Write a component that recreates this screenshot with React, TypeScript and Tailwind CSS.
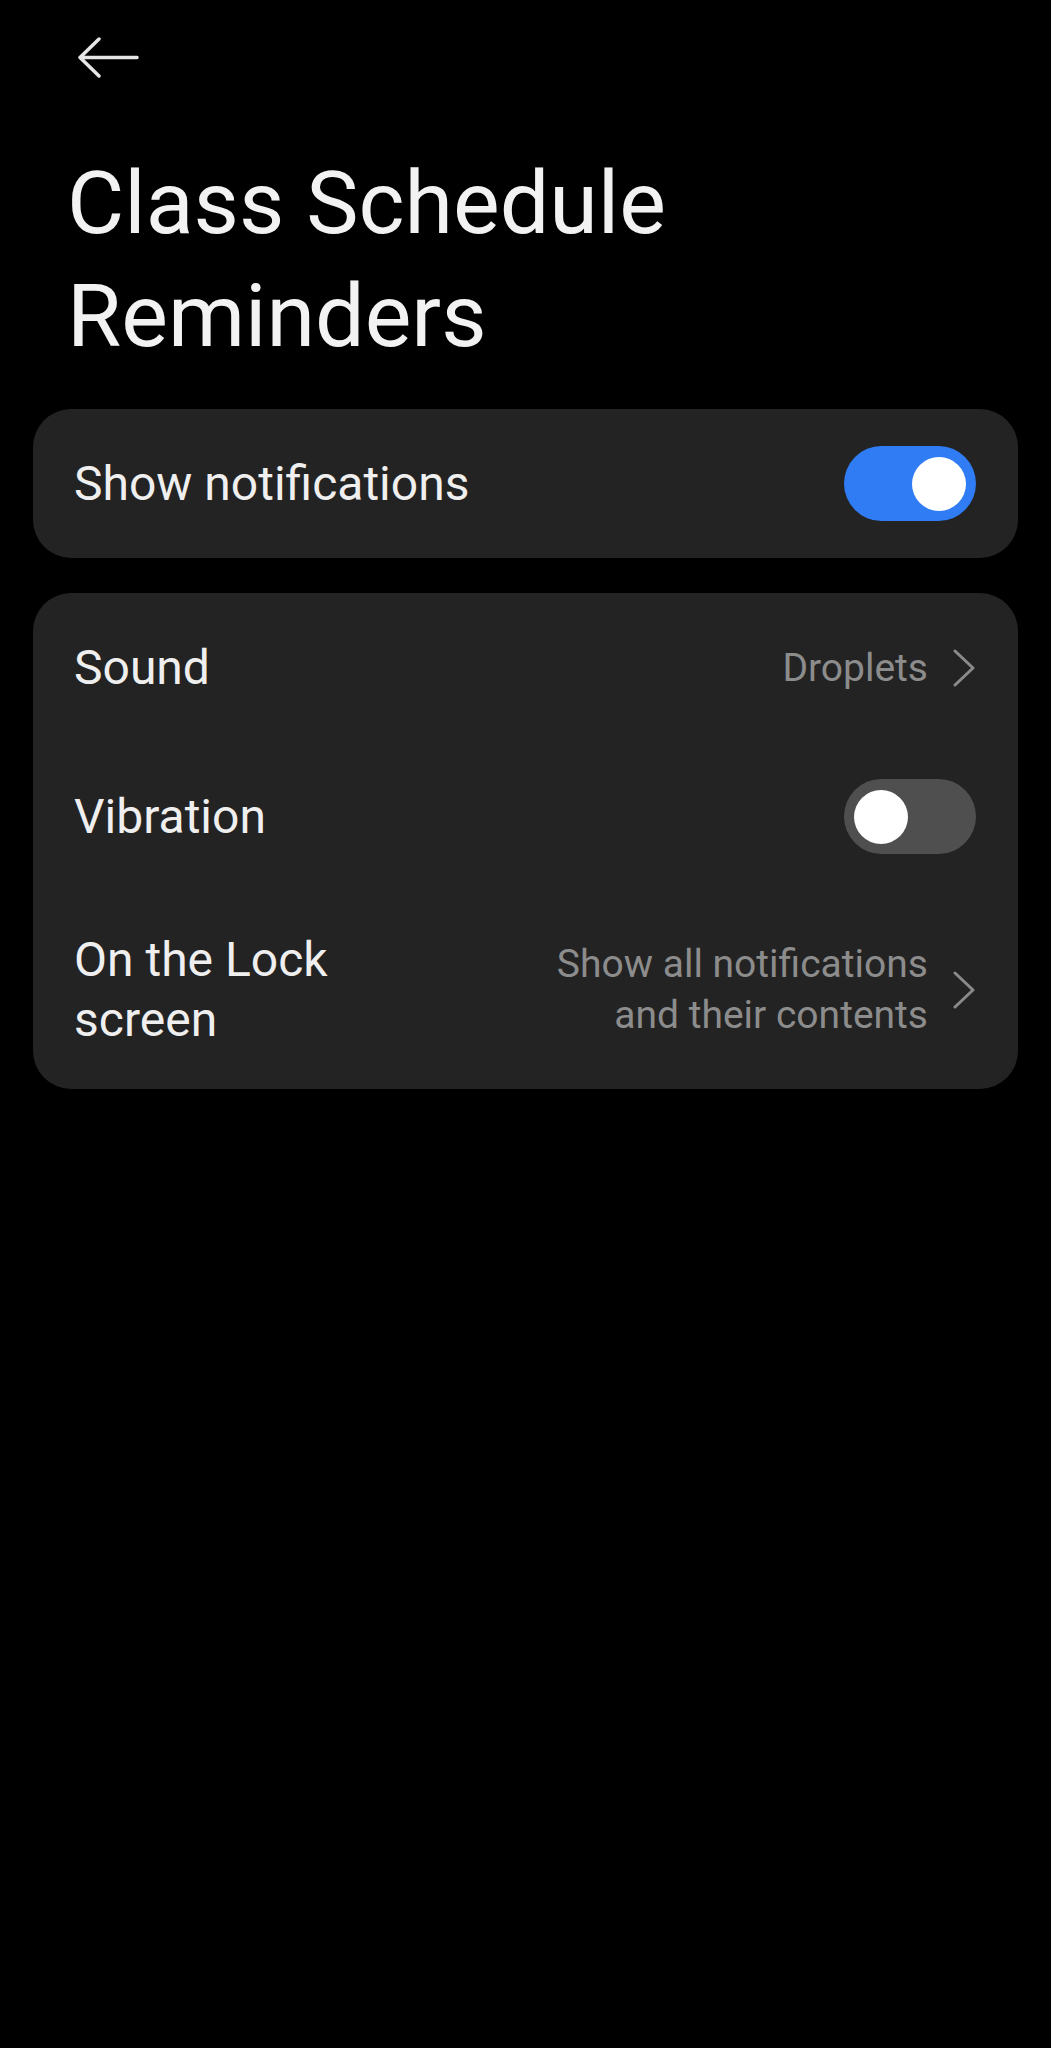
import { useState } from 'react';

// Settings page: notification options for one app channel
function Toggle({ on, onChange }: { on: boolean; onChange: () => void }) {
  return (
    <button
      onClick={onChange}
      className={`relative flex h-[75px] w-[132px] shrink-0 items-center rounded-full px-[10px] transition-colors ${
        on ? 'justify-end bg-[#2f7cf4]' : 'justify-start bg-[#4f4f4f]'
      }`}
    >
      <span className="block h-[54px] w-[54px] rounded-full bg-white" />
    </button>
  );
}

function Chevron() {
  return (
    <svg width="24" height="38" viewBox="0 0 24 38" fill="none" className="shrink-0">
      <path d="M3 2 L21 19 L3 36" stroke="#8a8a8a" strokeWidth="3" strokeLinecap="round" strokeLinejoin="round" />
    </svg>
  );
}

function Row({ label, children }: { label: string; children?: React.ReactNode }) {
  return (
    <div className="flex min-h-[149px] items-center justify-between gap-6 py-[39px] pl-[41px] pr-[42px]">
      <span className="max-w-[320px] text-[48px] leading-[60px] text-[#efefef]">{label}</span>
      {children}
    </div>
  );
}

export default function App() {
  const [showNotifs, setShowNotifs] = useState(true);
  const [vibration, setVibration] = useState(false);

  return (
    <div className="min-h-screen bg-black font-['Roboto',sans-serif] text-white">
      {/* Back */}
      <div className="pl-[77px] pt-[37px]">
        <svg width="62" height="42" viewBox="0 0 62 42" fill="none">
          <path d="M60 20.5 H3 M22 2 L3 20.5 L22 39" stroke="#e6e6e6" strokeWidth="3.5" strokeLinecap="round" strokeLinejoin="round" />
        </svg>
      </div>

      {/* Title */}
      <h1 className="mt-[67px] pl-[67px] text-[88px] font-normal leading-[113px] text-[#f2f2f2]">
        Class Schedule
        <br />
        Reminders
      </h1>

      <div className="mt-[37px] flex flex-col gap-[35px] px-[33px]">
        <div className="overflow-hidden rounded-[38px] bg-[#232323]">
          <div className="flex h-[149px] items-center justify-between pl-[41px] pr-[42px]">
            <span className="text-[48px] leading-[60px] text-[#efefef]">Show notifications</span>
            <Toggle on={showNotifs} onChange={() => setShowNotifs(!showNotifs)} />
          </div>
        </div>

        <div className="overflow-hidden rounded-[38px] bg-[#232323]">
          <Row label="Sound">
            <div className="flex items-center gap-[24px]">
              <span className="text-[39px] leading-[50px] text-[#8c8c8c]">Droplets</span>
              <Chevron />
            </div>
          </Row>
          <div className="flex h-[149px] items-center justify-between pl-[41px] pr-[42px]">
            <span className="text-[48px] leading-[60px] text-[#efefef]">Vibration</span>
            <Toggle on={vibration} onChange={() => setVibration(!vibration)} />
          </div>
          <Row label="On the Lock screen">
            <div className="flex items-center gap-[24px]">
              <span className="max-w-[400px] text-right text-[39px] leading-[51px] text-[#8c8c8c]">
                Show all notifications and their contents
              </span>
              <Chevron />
            </div>
          </Row>
        </div>
      </div>
    </div>
  );
}
